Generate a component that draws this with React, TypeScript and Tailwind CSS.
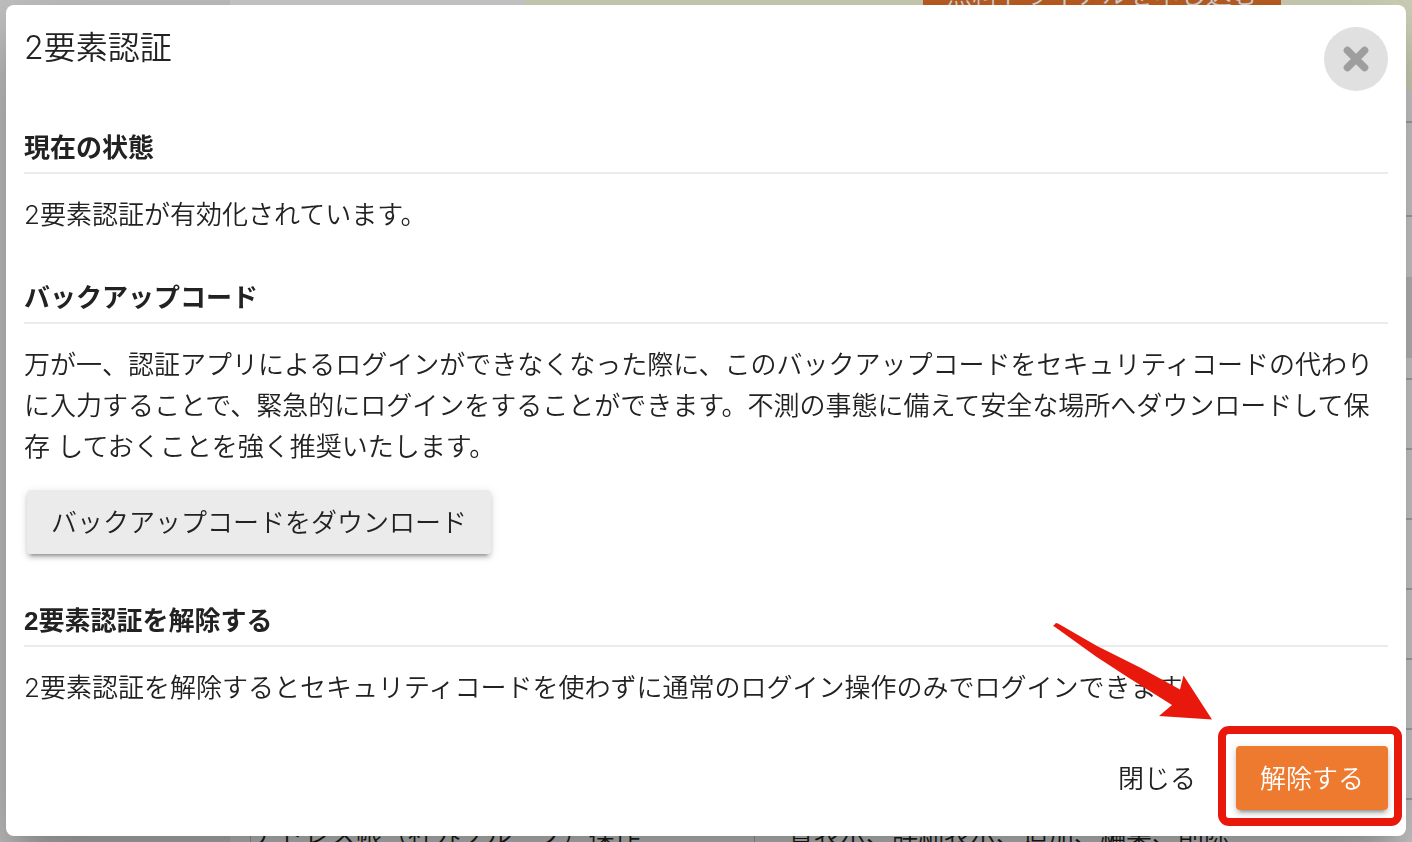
import type { ReactNode } from "react";

const permissions = [
  { id: 1, name: "", actions: "" },
  { id: 2, name: "", actions: "" },
  { id: 3, name: "", actions: "" },
  { id: 4, name: "", actions: "" },
  { id: 5, name: "", actions: "" },
  { id: 6, name: "", actions: "" },
  { id: 7, name: "アドレス帳（社外グループ）操作", actions: "一覧表示、詳細表示、追加、編集、削除" },
];

const raised =
  "shadow-[0_6px_2px_-4px_rgba(0,0,0,0.2),0_4px_4px_0_rgba(0,0,0,0.14),0_2px_10px_0_rgba(0,0,0,0.12)]";

function Backdrop() {
  return (
    <div className="flex h-full text-[#1c1c1c]">
      <div className="w-[230px] shrink-0 bg-[#c2c2c2]" />
      <div className="min-w-0 flex-1 bg-[#cecece]">
        <div className="flex h-[91px]">
          <div className="w-[295px] shrink-0" />
          <div className="flex flex-1 items-start justify-end bg-[#cfd1b8] pr-[131px]">
            <div className="-mt-[37px] h-16 w-[358px] bg-[#bd5f22] text-center leading-[64px] whitespace-nowrap text-[#d8d8d8]">
              無料トライアルを申し込む
            </div>
          </div>
        </div>
        <div className="h-[32px] border-b-2 border-[#a4a4a4]" />
        <div className="h-[94px] border-b-2 border-[#a4a4a4]" />
        <div className="mt-[60px] h-[81px] bg-[#bababa]" />
        <div className="mt-[20px] pl-[20px]">
          <table className="w-full border-collapse">
            <tbody>
              {permissions.map((row) => (
                <tr key={row.id} className="h-[70px] border-t-2 border-[#a4a4a4]">
                  <td className="w-[504px] border-l border-[#a4a4a4] pl-px whitespace-nowrap">{row.name}</td>
                  <td className="border-l border-[#a4a4a4] pl-[7px] whitespace-nowrap">{row.actions}</td>
                </tr>
              ))}
            </tbody>
          </table>
        </div>
      </div>
    </div>
  );
}

function Section({ title, children }: { title: string; children: ReactNode }) {
  return (
    <section>
      <h3 className="mb-5 border-b-2 border-[#ebebeb] pb-1 font-['Liberation_Sans','Noto_Sans_CJK_JP',sans-serif] leading-10 font-bold">
        {title}
      </h3>
      {children}
    </section>
  );
}

function CloseButton() {
  return (
    <button
      type="button"
      aria-label="閉じる"
      className="flex size-16 shrink-0 items-center justify-center rounded-full bg-[#e0e0e0]"
    >
      <svg viewBox="0 0 26 26" className="size-[26px]" fill="none" stroke="#9e9e9e" strokeWidth="7.4" strokeLinecap="round">
        <path d="M4.4 4.4 21.6 21.6M21.6 4.4 4.4 21.6" />
      </svg>
    </button>
  );
}

function Callout() {
  return (
    <>
      <span className="pointer-events-none absolute -top-5 -right-[14px] -bottom-4 -left-[18px] rounded-[11px] border-8 border-[#e8190c]" />
      <svg
        viewBox="0 0 162 100"
        className="pointer-events-none absolute right-[174px] bottom-[89px] h-[100px] w-[162px]"
        fill="#e8190c"
      >
        <path d="M1 5 4 2 6 2.500 45 25 88 46.500 128 68.500 131.500 54.500 160 98.500 107 95 120 84 77 57 44 35.500 3 6Z" />
      </svg>
    </>
  );
}

export default function App() {
  return (
    <div className="h-screen overflow-hidden font-['Inter','Noto_Sans_CJK_JP',sans-serif] text-[26px] leading-[41px] font-[350] text-[#222]">
      <Backdrop />
      <div className="fixed inset-0 overflow-hidden px-[6px] py-[5px]">
        <div
          role="dialog"
          aria-labelledby="dialog-title"
          className="rounded-[8px] bg-white px-[18px] pt-[22px] pb-[26px] shadow-[0_22px_30px_-14px_rgba(0,0,0,0.2),0_48px_76px_6px_rgba(0,0,0,0.14),0_18px_92px_16px_rgba(0,0,0,0.12)]"
        >
          <header className="flex items-start justify-between">
            <h2 id="dialog-title" className="text-[32px]">2要素認証</h2>
            <CloseButton />
          </header>

          <div className="mt-[37px] flex flex-col">
            <Section title="現在の状態">
              <p>2要素認証が有効化されています。</p>
            </Section>
            <div className="mt-[43px]">
              <Section title="バックアップコード">
                <p>
                  万が一、認証アプリによるログインができなくなった際に、このバックアップコードをセキュリティコードの代わりに入力することで、緊急的にログインをすることができます。不測の事態に備えて安全な場所へダウンロードして保存
                  しておくことを強く推奨いたします。
                </p>
                <button type="button" className={`mt-[23px] ml-[3px] block h-16 rounded bg-[#ebebeb] px-6 ${raised}`}>
                  バックアップコードをダウンロード
                </button>
              </Section>
            </div>
            <div className="mt-[47px]">
              <Section title="2要素認証を解除する">
                <p>2要素認証を解除するとセキュリティコードを使わずに通常のログイン操作のみでログインできます。</p>
              </Section>
            </div>
          </div>

          <footer className="mt-[38px] flex justify-end gap-4">
            <button type="button" className="h-16 rounded px-6">
              閉じる
            </button>
            <div className="relative">
              <button type="button" className={`block h-16 rounded bg-[#ed7a2f] px-6 text-white ${raised}`}>
                解除する
              </button>
              <Callout />
            </div>
          </footer>
        </div>
      </div>
    </div>
  );
}
